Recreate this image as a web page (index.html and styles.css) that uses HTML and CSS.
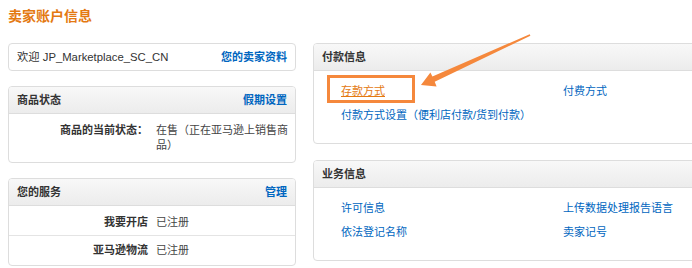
FILE: index.html
```html
<!DOCTYPE html>
<html lang="zh-CN">
<head>
<meta charset="utf-8">
<title>卖家账户信息</title>
<link rel="stylesheet" href="styles.css">
</head>
<body>
<div class="page">
  <h1 class="title">卖家账户信息</h1>
  <div class="columns">
    <div class="col col-left">
      <div class="box welcome">
        <span class="welcome-text">欢迎 JP_Marketplace_SC_CN</span>
        <a class="hlink" href="#">您的卖家资料</a>
      </div>
      <div class="box">
        <div class="box-head"><span class="head-title">商品状态</span><a class="hlink" href="#">假期设置</a></div>
        <div class="kv-row status">
          <div class="kv-label">商品的当前状态：</div>
          <div class="kv-value">在售（正在亚马逊上销售商品）</div>
        </div>
      </div>
      <div class="box">
        <div class="box-head"><span class="head-title">您的服务</span><a class="hlink" href="#">管理</a></div>
        <div class="kv-row first">
          <div class="kv-label">我要开店</div>
          <div class="kv-value">已注册</div>
        </div>
        <div class="kv-row divided">
          <div class="kv-label">亚马逊物流</div>
          <div class="kv-value">已注册</div>
        </div>
      </div>
    </div>
    <div class="col col-right">
      <div class="box">
        <div class="box-head"><span class="head-title">付款信息</span></div>
        <div class="link-grid">
          <a class="link active" href="#">存款方式<span class="highlight"></span></a>
          <a class="link" href="#">付费方式</a>
          <a class="link wide" href="#">付款方式设置（便利店付款/货到付款）</a>
        </div>
      </div>
      <div class="box">
        <div class="box-head"><span class="head-title">业务信息</span></div>
        <div class="link-grid">
          <a class="link" href="#">许可信息</a>
          <a class="link" href="#">上传数据处理报告语言</a>
          <a class="link" href="#">依法登记名称</a>
          <a class="link" href="#">卖家记号</a>
        </div>
      </div>
    </div>
  </div>
  <svg class="arrow" width="692" height="268" viewBox="0 0 692 268">
    <polygon points="421,85 436.6,86.4 434.7,81.8 530.4,35.7 529.7,34.3 432.4,76.6 430.4,72.4" fill="#f5883c"/>
  </svg>
</div>
</body>
</html>
```

FILE: styles.css
```css
html, body {
  margin: 0;
  padding: 0;
  background: #ffffff;
}
body {
  padding: 8px;
  overflow: hidden;
  font-family: "Liberation Sans", "Noto Sans CJK SC", sans-serif;
  font-size: 11px;
  color: #333333;
}
.page {
  width: 800px;
}
a {
  text-decoration: none;
  color: #0066c0;
}
.title {
  margin: 0 0 19px 0;
  font-size: 14px;
  line-height: 16px;
  font-weight: bold;
  color: #e47911;
}
.columns {
  display: flex;
  gap: 17px;
  align-items: flex-start;
}
.col {
  display: flex;
  flex-direction: column;
}
.col-left {
  width: 288px;
  gap: 15px;
}
.col-right {
  width: 480px;
  gap: 16px;
}
.box {
  border: 1px solid #dddddd;
  border-radius: 4px;
  background: #ffffff;
  box-sizing: border-box;
}
.welcome {
  display: flex;
  justify-content: space-between;
  padding: 5px 8px;
  line-height: 16px;
}
.welcome-text {
  color: #333333;
  font-size: 11.3px;
}
.hlink {
  font-weight: bold;
  color: #0066c0;
}
.box-head {
  display: flex;
  justify-content: space-between;
  padding: 5px 8px;
  line-height: 16px;
  background: linear-gradient(#f8f8f8, #ececec);
  border-bottom: 1px solid #dddddd;
  border-radius: 3px 3px 0 0;
}
.head-title {
  font-weight: bold;
  color: #333333;
}
.kv-row {
  display: grid;
  grid-template-columns: 139px 1fr;
  column-gap: 8px;
  padding: 7px 6px 7px 0;
  line-height: 15px;
}
.kv-row.status {
  padding-top: 9px;
  padding-bottom: 9px;
}
.kv-row.first {
  padding-top: 9px;
  padding-bottom: 5px;
}
.kv-row.divided {
  border-top: 1px solid #e4e4e4;
}
.kv-label {
  text-align: right;
  font-weight: bold;
  color: #333333;
}
.kv-value {
  color: #444444;
}
.link-grid {
  display: grid;
  grid-template-columns: 222px 1fr;
  grid-auto-rows: 24px;
  padding: 8px 0 16px 27px;
  line-height: 24px;
}
.link {
  position: relative;
  justify-self: start;
  color: #0066c0;
}
.link.wide {
  grid-column: 1 / span 2;
}
.link.active {
  color: #e47911;
  text-decoration: underline;
}
.highlight {
  position: absolute;
  left: -14px;
  top: -4px;
  width: 88px;
  height: 28px;
  box-sizing: border-box;
  border: 3px solid #f5883c;
}
.arrow {
  position: absolute;
  left: 0;
  top: 0;
  pointer-events: none;
}
```
